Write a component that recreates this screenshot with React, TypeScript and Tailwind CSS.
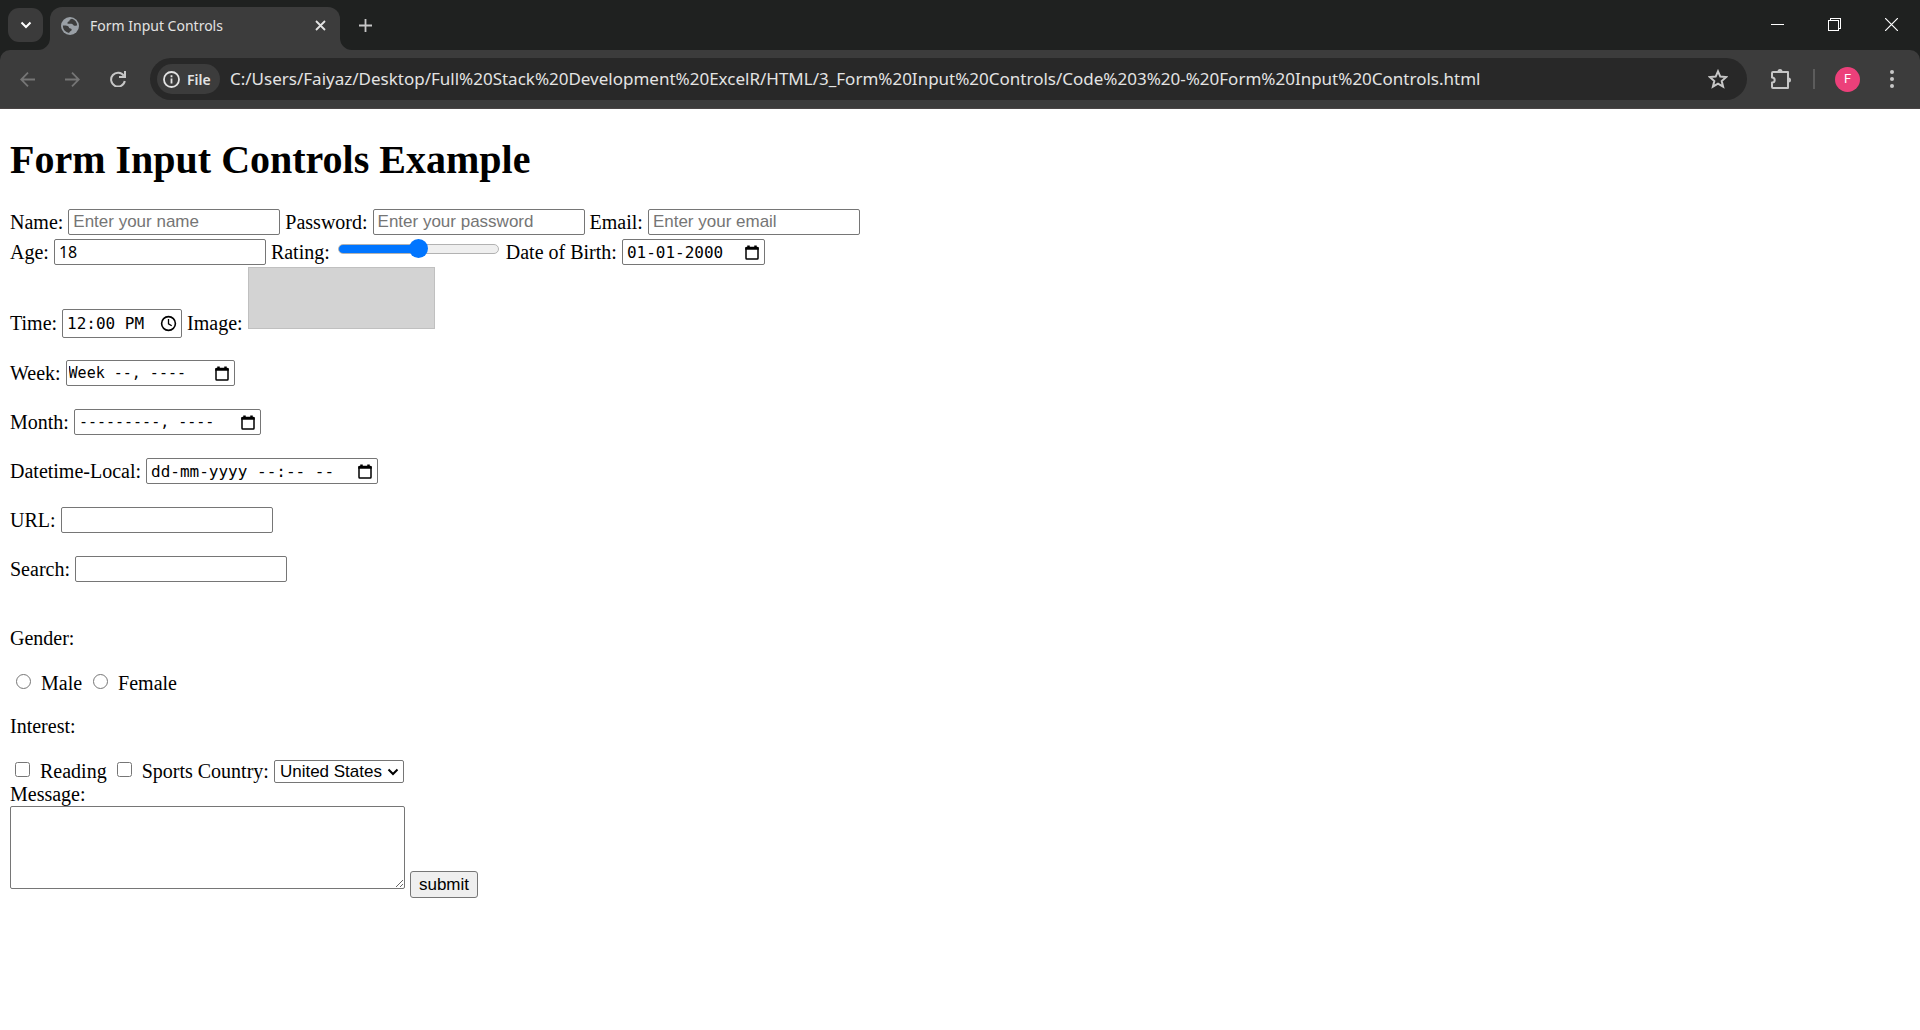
import React, { useId, useState } from "react";

const field =
  "h-[26px] w-[212px] rounded-[2px] border border-[#767676] bg-white px-1 text-black placeholder:text-[#757575] focus:outline-2 focus:outline-black";
const rowClass = "flex h-[30px] items-center gap-[5px] whitespace-nowrap";
const iconButton = "flex shrink-0 items-center justify-center";

function ChevronIcon({ className }: { className: string }) {
  return (
    <svg className={className} viewBox="0 0 12 12" fill="none" stroke="currentColor" strokeWidth="2">
      <path d="M1.5 3.5 6 8l4.500-4.500" />
    </svg>
  );
}

function CalendarIcon() {
  return (
    <svg className="h-[17px] w-[16px]" viewBox="0 0 16 17" fill="none" stroke="currentColor">
      <rect x="2" y="3.500" width="12" height="11.500" rx=".8" strokeWidth="1.500" />
      <path d="M1.300 4.500h13.400M4.500 1.500v2M11.500 1.500v2" strokeWidth="2.500" />
    </svg>
  );
}

function ClockIcon() {
  return (
    <svg className="h-[17px] w-[17px]" viewBox="0 0 17 17" fill="none" stroke="currentColor" strokeWidth="1.600">
      <circle cx="8.500" cy="8.500" r="6.900" />
      <path d="M8.500 4v4.800l3.200 2" strokeWidth="1.300" />
    </svg>
  );
}

function TextField(props: { label: string; type: string; placeholder?: string; value?: string }) {
  const id = useId();
  const font = props.value
    ? "font-['Noto_Sans',sans-serif] text-[16px]"
    : "font-['Liberation_Sans',sans-serif] text-[17px]";
  return (
    <>
      <label htmlFor={id}>{props.label}</label>
      <input
        id={id}
        type={props.type}
        placeholder={props.placeholder}
        defaultValue={props.value}
        className={`${field} ${font}`}
      />
    </>
  );
}

function PickerField(props: {
  label: string;
  value: string;
  boxClass: string;
  clock?: boolean;
}) {
  const id = useId();
  return (
    <>
      <label htmlFor={id}>{props.label}</label>
      <span
        className={`flex items-center rounded-[2px] border border-[#767676] bg-white pr-1 focus-within:outline-2 ${props.boxClass}`}
      >
        <input
          id={id}
          type="text"
          defaultValue={props.value}
          className="w-0 min-w-0 flex-1 bg-transparent font-['DejaVu_Sans_Mono',monospace] outline-none"
        />
        <button type="button" aria-label={`Open picker for ${props.label}`} className={iconButton}>
          {props.clock ? <ClockIcon /> : <CalendarIcon />}
        </button>
      </span>
    </>
  );
}

function Choice(props: { label: string; type: "radio" | "checkbox"; name: string }) {
  const id = useId();
  return (
    <span className="flex items-center gap-[10px]">
      <input id={id} type={props.type} name={props.name} className="mb-1 h-[15px] w-[15px] shrink-0" />
      <label htmlFor={id}>{props.label}</label>
    </span>
  );
}

function TabStrip() {
  return (
    <div className="flex h-[50px] bg-[#1f2120] pl-2">
      <button
        aria-label="Search tabs"
        className="mt-2 flex h-[34px] w-[35px] items-center justify-center rounded-[11px] bg-[#3b3b3b] text-white"
      >
        <ChevronIcon className="h-3 w-3" />
      </button>
      <div className="relative mt-[7px] ml-[7px] flex w-[290px] items-center rounded-t-[12px] bg-[#3c3c3c] pr-[10px] pl-[11px] pb-[6px]">
        <svg className="absolute bottom-0 -left-3 h-3 w-3" viewBox="0 0 12 12" fill="#3c3c3c">
          <path d="M12 0v12H0A12 12 0 0 0 12 0Z" />
        </svg>
        <svg className="absolute -right-3 bottom-0 h-3 w-3" viewBox="0 0 12 12" fill="#3c3c3c">
          <path d="M0 0v12h12A12 12 0 0 1 0 0Z" />
        </svg>
        <svg className="h-[18px] w-[18px]" viewBox="0 0 18 18">
          <circle cx="9" cy="9" r="9" fill="#9aa0a6" />
          <path
            d="M11 1.800C9 2.200 8.200 3 8.500 4.300c-1.600.1-2.300.9-1.900 2.400h3.900c1.700.3 1.700 1.900 3 2 .9.100 1.600-.4 2.700-.2C16.100 5.300 14.100 2.600 11 1.800ZM1.900 8.600c1.900-.1 4.400-.2 5.500 1 .7.700.4 1.500 1.300 1.700 1.100.2 2.200.6 2 1.700-.3 1.200-2.300 1.100-2.600 3C4.400 15.500 1.800 12.500 1.900 8.600Z"
            fill="#3c3c3c"
          />
        </svg>
        <span className="ml-[11px] flex-1 text-[14px] text-[#e3e3e3]">Form Input Controls</span>
        <button aria-label="Close tab" className="p-1 text-[#e3e3e3]">
          <svg className="h-[11px] w-[11px]" viewBox="0 0 11 11" stroke="currentColor" strokeWidth="1.800">
            <path d="m1 1 9 9m0-9-9 9" />
          </svg>
        </button>
      </div>
      <button aria-label="New tab" className="ml-[19px] h-[50px] text-[#c7c7c7]">
        <svg className="h-[13px] w-[13px]" viewBox="0 0 13 13" stroke="currentColor" strokeWidth="1.800">
          <path d="M6.500 0v13M0 6.500h13" />
        </svg>
      </button>
      <div className="ml-auto flex h-[49px] text-white">
        <button aria-label="Minimize" className="flex w-[57px] items-center justify-center">
          <svg className="h-[13px] w-[13px]" viewBox="0 0 13 13" stroke="currentColor" shapeRendering="crispEdges">
            <path d="M0 6.500h13" />
          </svg>
        </button>
        <button aria-label="Restore" className="flex w-[57px] items-center justify-center">
          <svg
            className="h-[13px] w-[13px]"
            viewBox="0 0 13 13"
            fill="none"
            stroke="currentColor"
            shapeRendering="crispEdges"
          >
            <path d="M.5 2.500h10v10H.5zM2.500 2.500v-2h10v10h-2" />
          </svg>
        </button>
        <button aria-label="Close" className="flex w-[57px] items-center justify-center">
          <svg className="h-[13px] w-[13px]" viewBox="0 0 13 13" stroke="currentColor" strokeWidth="1.200">
            <path d="m0 0 13 13M13 0 0 13" />
          </svg>
        </button>
      </div>
    </div>
  );
}

function Toolbar() {
  return (
    <div className="bg-[#1f2120]">
      <div className="flex h-[59px] items-center rounded-t-[10px] border-b border-[#4a4545] bg-[#3c3c3c] text-[#c7c7c7]">
        <button aria-label="Back" className={`${iconButton} ml-5 text-[#757575]`}>
          <svg className="h-[15px] w-[15px]" viewBox="0 0 15 15" fill="none" stroke="currentColor" strokeWidth="1.800">
            <path d="M15 7.500H1.500M8 .7 1.200 7.500 8 14.300" />
          </svg>
        </button>
        <button aria-label="Forward" className={`${iconButton} ml-[30px] text-[#757575]`}>
          <svg className="h-[15px] w-[15px]" viewBox="0 0 15 15" fill="none" stroke="currentColor" strokeWidth="1.800">
            <path d="M0 7.500h13.500M7 .7l6.800 6.800L7 14.300" />
          </svg>
        </button>
        <button aria-label="Reload" className={`${iconButton} ml-[30px]`}>
          <svg className="h-4 w-4" viewBox="0 0 16 16" fill="none" stroke="currentColor" strokeWidth="2">
            <path d="M13.800 4.800A6.900 6.900 0 1 0 14.800 10" />
            <path d="M15 0v6H9" />
          </svg>
        </button>
        <div className="ml-6 flex h-[42px] min-w-0 flex-1 items-center rounded-full bg-[#282828] pr-[19px] pl-[7px]">
          <button className="flex h-[30px] w-[63px] shrink-0 items-center rounded-full bg-[#3c3c3c] pl-[6px] text-[#e3e3e3]">
            <svg className="h-[17px] w-[17px]" viewBox="0 0 17 17" fill="none" stroke="currentColor" strokeWidth="1.800">
              <circle cx="8.500" cy="8.500" r="7.500" />
              <path d="M8.500 7.500v5M8.500 4.300v2" />
            </svg>
            <span className="ml-[7px] text-[14px] font-semibold">File</span>
          </button>
          <input
            type="text"
            aria-label="Address"
            className="ml-[10px] min-w-0 flex-1 bg-transparent text-[17px] text-[#e3e3e3] outline-none"
            defaultValue="C:/Users/Faiyaz/Desktop/Full%20Stack%20Development%20ExcelR/HTML/3_Form%20Input%20Controls/Code%203%20-%20Form%20Input%20Controls.html"
          />
          <button aria-label="Bookmark" className={iconButton}>
            <svg className="h-5 w-5" viewBox="0 0 20 20" fill="none" stroke="currentColor" strokeWidth="2">
              <path d="m10 2.300 2.300 5.300 5.900.5-4.500 3.900 1.400 5.700-5.100-3.100-5.100 3.100 1.400-5.700L1.800 8.100l5.900-.5Z" />
            </svg>
          </button>
        </div>
        <button aria-label="Extensions" className={`${iconButton} ml-[23px]`}>
          <svg className="h-[22px] w-[22px]" viewBox="0 0 22 22" fill="none" stroke="currentColor" strokeWidth="2">
            <path
              d="M3 4h15v16H3q-1 0-1-1v-4.500c1.600 0 2.700-1.100 2.700-2.500S3.600 9.500 2 9.500V5q0-1 1-1Z"
              strokeLinejoin="round"
            />
            <path d="M7.500 3.500a2.500 2.500 0 0 1 5 0ZM18.500 9.500a2.500 2.500 0 0 1 0 5Z" fill="currentColor" stroke="none" />
          </svg>
        </button>
        <span className="ml-[21px] h-5 w-[2px] bg-[#5c5c5c]" />
        <button
          aria-label="Profile"
          className="ml-5 flex h-[25px] w-[25px] items-center justify-center rounded-full bg-[#ec407a] font-[Roboto,sans-serif] text-[13px] text-white"
        >
          F
        </button>
        <button aria-label="Menu" className={`${iconButton} mr-[26px] ml-[30px]`}>
          <svg className="h-[18px] w-1" viewBox="0 0 4 18" fill="currentColor">
            <circle cx="2" cy="2" r="2" />
            <circle cx="2" cy="9" r="2" />
            <circle cx="2" cy="16" r="2" />
          </svg>
        </button>
      </div>
    </div>
  );
}

function RatingSlider() {
  const id = useId();
  const [value, setValue] = useState(5);
  return (
    <>
      <label htmlFor={id}>Rating:</label>
      <input
        id={id}
        type="range"
        min={0}
        max={10}
        value={value}
        onChange={(event) => setValue(Number(event.target.value))}
        style={{ backgroundImage: `linear-gradient(to right, #0075ff ${value * 10}%, #efefef ${value * 10}%)` }}
        className="mr-[2px] mb-[7px] ml-[3px] h-[10px] w-[161px] appearance-none rounded-full border border-[#b2b2b2] [&::-webkit-slider-thumb]:h-[19px] [&::-webkit-slider-thumb]:w-[19px] [&::-webkit-slider-thumb]:appearance-none [&::-webkit-slider-thumb]:rounded-full [&::-webkit-slider-thumb]:bg-[#0075ff]"
      />
    </>
  );
}

function CountrySelect() {
  const id = useId();
  return (
    <span className="flex items-center gap-[5px]">
      <label htmlFor={id}>Country:</label>
      <span className="relative flex">
        <select
          id={id}
          className="h-[23px] w-[130px] appearance-none rounded-[2px] border border-[#767676] bg-white pl-[5px] font-['Liberation_Sans',sans-serif] text-[17px] leading-5"
        >
          <option>United States</option>
        </select>
        <ChevronIcon className="pointer-events-none absolute top-[6px] right-[5px] h-3 w-3" />
      </span>
    </span>
  );
}

export default function App() {
  const message = useId();
  return (
    <div className="min-h-screen bg-white">
      <header className="font-['Noto_Sans',sans-serif]">
        <TabStrip />
        <Toolbar />
      </header>
      <main className="px-[10px] pt-7 font-['Liberation_Serif',serif] text-[20px] leading-[23px] text-black">
        <h1 className="text-[40px] leading-[46px] font-bold">Form Input Controls Example</h1>
        <form className="mt-6" onSubmit={(event) => event.preventDefault()}>
          <div className={rowClass}>
            <TextField label="Name:" type="text" placeholder="Enter your name" />
            <TextField label="Password:" type="password" placeholder="Enter your password" />
            <TextField label="Email:" type="email" placeholder="Enter your email" />
          </div>
          <div className={rowClass}>
            <TextField label="Age:" type="text" value="18" />
            <RatingSlider />
            <PickerField label="Date of Birth:" value="01-01-2000" boxClass="h-[26px] w-[143px] pl-1 text-[16px]" />
          </div>
          <div className="flex items-end gap-[5px] pb-1">
            <span className="-mb-[9px] flex items-center gap-[5px]">
              <PickerField label="Time:" value="12:00 PM" clock boxClass="h-[29px] w-[120px] pl-1 text-[16px]" />
            </span>
            <label htmlFor="image-input" className="-mb-[6px]">
              Image:
            </label>
            <input
              id="image-input"
              type="button"
              aria-label="Image"
              className="h-[62px] w-[187px] border border-[#c0c0c0] bg-[#d3d3d3]"
            />
          </div>
          <div className="mt-[25px] flex flex-col gap-[19px]">
            <div className={rowClass}>
              <PickerField label="Week:" value="Week --, ----" boxClass="h-[26px] w-[169px] pl-[2px] text-[15px]" />
            </div>
            <div className={rowClass}>
              <PickerField label="Month:" value="---------, ----" boxClass="h-[26px] w-[187px] pl-1 text-[15px]" />
            </div>
            <div className={rowClass}>
              <PickerField
                label="Datetime-Local:"
                value="dd-mm-yyyy --:-- --"
                boxClass="h-[26px] w-[232px] pl-1 text-[16px]"
              />
            </div>
            <div className={rowClass}>
              <TextField label="URL:" type="url" />
            </div>
            <div className={rowClass}>
              <TextField label="Search:" type="search" />
            </div>
          </div>
          <p className="mt-[43px]">Gender:</p>
          <div className="mt-[22px] ml-[6px] flex gap-[11px]">
            <Choice label="Male" type="radio" name="gender" />
            <Choice label="Female" type="radio" name="gender" />
          </div>
          <p className="mt-5">Interest:</p>
          <div className="mt-[22px] ml-[5px] flex items-center gap-[10px]">
            <Choice label="Reading" type="checkbox" name="reading" />
            <span className="flex items-center gap-[5px]">
              <Choice label="Sports" type="checkbox" name="sports" />
              <CountrySelect />
            </span>
          </div>
          <label htmlFor={message} className="block">
            Message:
          </label>
          <div className="flex items-end gap-[5px]">
            <textarea
              id={message}
              className="h-[83px] w-[395px] resize rounded-[2px] border border-[#767676] p-1 font-['Liberation_Mono',monospace] text-[16px]"
            />
            <button
              type="submit"
              className="-mb-[9px] h-[27px] w-[68px] rounded-[3px] border border-[#767676] bg-[#efefef] font-['Liberation_Sans',sans-serif] text-[17px]"
            >
              submit
            </button>
          </div>
        </form>
      </main>
    </div>
  );
}
